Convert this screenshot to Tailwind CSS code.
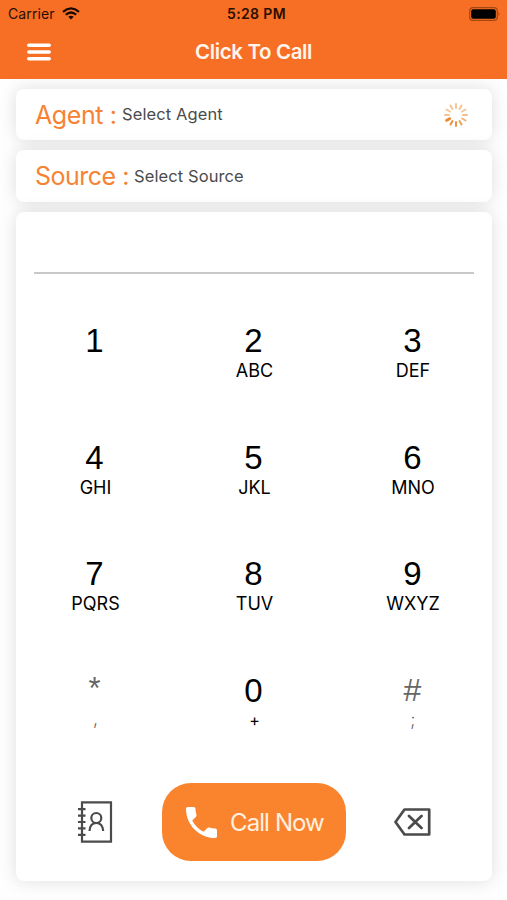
<!DOCTYPE html>
<html lang="en">
<head>
<meta charset="utf-8">
<title>Click To Call</title>
<script src="https://cdn.jsdelivr.net/npm/@tailwindcss/browser@4"></script>
</head>
<body class="flex h-[900px] w-[507px] flex-col overflow-hidden bg-[#fefefe] font-['Inter',sans-serif] text-black">
<header class="z-10 h-[79px] shrink-0 bg-[#f66f24]">
  <div class="grid h-[27px] grid-cols-3 items-center pl-2 pr-[6px] text-[#2a0e00]">
    <div class="flex items-center gap-[7px]">
      <span class="text-[14px] leading-[27px] tracking-[0.1px]">Carrier</span>
      <svg class="h-[13px] w-[18px]" viewBox="0 0 18 13" fill="none" stroke="#190800" stroke-width="2.2"><path d="M1 4.8Q9-2 17 4.8M3.8 7.8Q9 3.2 14.2 7.8"/><path d="M6.3 9.8Q9 7.7 11.7 9.8L9 12.5Z" fill="#190800" stroke="none"/></svg>
    </div>
    <span class="relative left-[2px] whitespace-nowrap text-center text-[14px] font-semibold leading-[27px] tracking-[0.35px]">5:28 PM</span>
    <svg class="h-[14px] w-[32px] justify-self-end" viewBox="0 0 32 14"><rect x=".7" y=".7" width="27.6" height="12.6" rx="3.4" fill="none" stroke="#a34713" stroke-width="1.2"/><rect x="2.2" y="2.2" width="24.6" height="9.6" rx="2" fill="#000"/><path d="M29.5 5q2 2 0 4z" fill="#a34713"/></svg>
  </div>
  <div class="grid h-[50px] grid-cols-[100px_1fr_100px] items-center">
    <svg class="ml-[27px] h-[18px] w-6" viewBox="0 0 24 18" stroke="#fff" stroke-width="3.5" stroke-linecap="round"><path d="M1.8 2.2H22.2M1.8 9H22.2M1.8 15.8H22.2"/></svg>
    <h1 class="pt-px text-center text-[20.5px] font-semibold tracking-[-0.35px] text-[#fff5ed]">Click To Call</h1>
  </div>
</header>
<main class="flex flex-col gap-[10px] pl-[16px] pr-[15px] pt-[10px]">
  <section class="flex h-[51px] items-center rounded-lg bg-white pl-[19px] pr-6 shadow-[0_0_17px_rgba(0,0,0,0.13)]">
    <span class="w-[82px] whitespace-pre pt-[2px] text-[25px] tracking-[-0.4px] text-[#f68333]">Agent :</span>
    <span class="ml-[5px] text-[16.5px] tracking-[0.1px] text-[#4b4b4b]">Select Agent</span>
    <svg class="ml-auto h-6 w-6" viewBox="-12 -12 24 24" stroke="#ea8b30" stroke-width="2" stroke-linecap="round">
      <path d="M0-7V-11" opacity=".5"/><path d="M0-7V-11" transform="rotate(30)" opacity=".5"/><path d="M0-7V-11" transform="rotate(60)" opacity=".5"/><path d="M0-7V-11" transform="rotate(90)" opacity=".55"/><path d="M0-7V-11" transform="rotate(120)" opacity=".65"/><path d="M0-7V-11" transform="rotate(150)" opacity=".8"/><path d="M0-7V-11" transform="rotate(180)" opacity=".9"/><path d="M0-7V-11" transform="rotate(210)" opacity=".95"/><path d="M0-7V-11" transform="rotate(240)" stroke-width="2.6"/><path d="M0-7V-11" transform="rotate(270)" opacity=".5"/><path d="M0-7V-11" transform="rotate(300)" opacity=".5"/><path d="M0-7V-11" transform="rotate(330)" opacity=".5"/>
    </svg>
  </section>
  <section class="flex h-[52px] items-center rounded-lg bg-white pl-[19px] pr-6 shadow-[0_0_17px_rgba(0,0,0,0.13)]">
    <span class="w-[94px] whitespace-pre pt-[2px] text-[25px] tracking-[-0.5px] text-[#f68333]">Source :</span>
    <span class="ml-[5px] text-[16.5px] tracking-[0.1px] text-[#4b4b4b]">Select Source</span>
  </section>
  <section class="flex h-[669px] flex-col rounded-lg bg-white shadow-[0_0_17px_rgba(0,0,0,0.13)]">
    <div class="mx-[18px] h-[62px] shrink-0 border-b-2 border-[#c8c8c8]"></div>
    <div class="grid auto-rows-[116.5px] grid-cols-[159px_159px_158px] pt-[50px] text-center text-[18px]">
      <div><div class="pr-[2px] font-['Liberation_Sans',sans-serif] text-[33px] leading-[33px]">1</div></div>
      <div><div class="pr-[2px] font-['Liberation_Sans',sans-serif] text-[33px] leading-[33px]">2</div><div class="leading-[27px]">ABC</div></div>
      <div><div class="pr-px font-['Liberation_Sans',sans-serif] text-[33px] leading-[33px]">3</div><div class="leading-[27px]">DEF</div></div>
      <div><div class="pr-[2px] font-['Liberation_Sans',sans-serif] text-[33px] leading-[33px]">4</div><div class="leading-[27px]">GHI</div></div>
      <div><div class="pr-[2px] font-['Liberation_Sans',sans-serif] text-[33px] leading-[33px]">5</div><div class="leading-[27px]">JKL</div></div>
      <div><div class="pr-px font-['Liberation_Sans',sans-serif] text-[33px] leading-[33px]">6</div><div class="leading-[27px]">MNO</div></div>
      <div><div class="pr-[2px] font-['Liberation_Sans',sans-serif] text-[33px] leading-[33px]">7</div><div class="leading-[27px]">PQRS</div></div>
      <div><div class="pr-[2px] font-['Liberation_Sans',sans-serif] text-[33px] leading-[33px]">8</div><div class="leading-[27px]">TUV</div></div>
      <div><div class="pr-px font-['Liberation_Sans',sans-serif] text-[33px] leading-[33px]">9</div><div class="leading-[27px]">WXYZ</div></div>
      <div class="text-[#666]"><div class="pr-[2px] font-['Liberation_Sans',sans-serif] text-[31px] leading-[29px]">*</div><div class="pt-1 font-light leading-[24px]">,</div></div>
      <div><div class="pr-[2px] font-['Liberation_Sans',sans-serif] text-[33px] leading-[33px]">0</div><div class="text-[16px] leading-[26px]">+</div></div>
      <div class="text-[#666]"><div class="pr-px font-['Liberation_Sans',sans-serif] text-[32px] leading-[33px]">#</div><div class="font-light leading-[26px]">;</div></div>
    </div>
    <div class="-mt-[7px] grid grid-cols-[146px_184px_146px] items-center">
      <svg class="ml-[62px] h-[42px] w-[35px]" viewBox="0 0 35 42" fill="none" stroke="#4b4b4b" stroke-width="2.2"><path d="M4 1.3H33V40.7H4ZM0 8.2H7.5M0 14.6H7.5M0 21H7.5M0 27.4H7.5M0 33.8H7.5"/><circle cx="18.3" cy="17" r="5"/><path d="M11.5 30Q12 22 18.3 22T25.2 30"/></svg>
      <button class="flex h-[78px] items-center rounded-[29px] bg-[#f9842d] pl-6 text-[24px] tracking-[-0.9px] text-[#fff0e0]">
        <svg class="h-[31px] w-[31px]" viewBox="3 3 18 18" fill="#fff"><path d="M6.62 10.79c1.44 2.83 3.76 5.14 6.59 6.59l2.2-2.2c.27-.27.67-.36 1.02-.24 1.12.37 2.33.57 3.57.57.55 0 1 .45 1 1V20c0 .55-.45 1-1 1C10.61 21 3 13.39 3 4c0-.55.45-1 1-1h3.5c.55 0 1 .45 1 1 0 1.25.2 2.45.57 3.57.11.35.03.74-.25 1.02z"/></svg>
        <span class="ml-[13px] whitespace-nowrap pt-px">Call Now</span>
      </button>
      <svg class="ml-[48px] h-[28px] w-[37px]" viewBox="0 0 37 28" fill="none" stroke="#4b4b4b" stroke-width="2.7" stroke-linejoin="round" stroke-linecap="round"><path d="M10.5 1.5H35.2V26.5H10.5L1.5 14ZM15 8L27.5 20M27.5 8L15 20"/></svg>
    </div>
  </section>
</main>
</body>
</html>
